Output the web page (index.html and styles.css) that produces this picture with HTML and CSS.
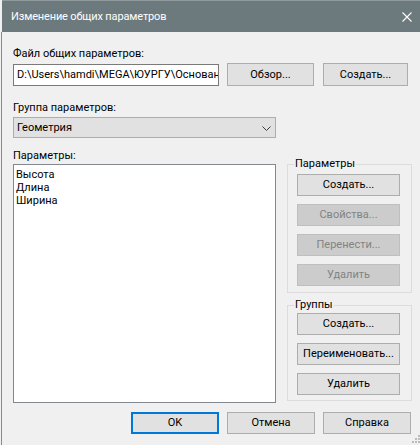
FILE: index.html
```html
<!DOCTYPE html>
<html lang="ru">
<head>
<meta charset="utf-8">
<title>Изменение общих параметров</title>
<link rel="stylesheet" href="styles.css">
</head>
<body>
<div class="window">
  <div class="titlebar">
    <span class="title">Изменение общих параметров</span>
    <svg class="close" width="10" height="10" viewBox="0 0 10 10"><path d="M0.5 0.5L9.5 9.5M9.5 0.5L0.5 9.5" stroke="#ffffff" stroke-width="1.1" fill="none"/></svg>
  </div>
  <div class="content">
    <div class="label">Файл общих параметров:</div>
    <div class="file-row">
      <div class="input"><span class="input-text">D:\Users\hamdi\MEGA\ЮУРГУ\Основани</span></div>
      <button class="btn btn-browse">Обзор...</button>
      <button class="btn btn-new">Создать...</button>
    </div>
    <div class="label label-group">Группа параметров:</div>
    <div class="select">
      <span class="select-text">Геометрия</span>
      <svg class="chevron" width="9" height="5" viewBox="0 0 9 5"><path d="M0.5 0.5L4.5 4.5L8.5 0.5" stroke="#3c3c3c" stroke-width="1" fill="none"/></svg>
    </div>
    <div class="middle">
      <div class="left">
        <div class="label label-params">Параметры:</div>
        <div class="listbox">
          <div class="item">Высота</div>
          <div class="item">Длина</div>
          <div class="item">Ширина</div>
        </div>
      </div>
      <div class="right">
        <div class="group group-params">
          <span class="legend">Параметры</span>
          <button class="btn gbtn">Создать...</button>
          <button class="btn gbtn disabled">Свойства...</button>
          <button class="btn gbtn disabled">Перенести...</button>
          <button class="btn gbtn disabled">Удалить</button>
        </div>
        <div class="group group-groups">
          <span class="legend">Группы</span>
          <button class="btn gbtn">Создать...</button>
          <button class="btn gbtn">Переименовать...</button>
          <button class="btn gbtn">Удалить</button>
        </div>
      </div>
    </div>
    <div class="footer">
      <button class="btn fbtn default">OK</button>
      <button class="btn fbtn">Отмена</button>
      <button class="btn fbtn">Справка</button>
    </div>
  </div>
  <svg class="grip" width="8" height="8" viewBox="0 0 8 8">
    <rect x="6" y="0" width="2" height="2" fill="#bdbdbd"/>
    <rect x="3" y="3" width="2" height="2" fill="#bdbdbd"/>
    <rect x="6" y="3" width="2" height="2" fill="#bdbdbd"/>
    <rect x="0" y="6" width="2" height="2" fill="#bdbdbd"/>
    <rect x="3" y="6" width="2" height="2" fill="#bdbdbd"/>
    <rect x="6" y="6" width="2" height="2" fill="#bdbdbd"/>
  </svg>
</div>
</body>
</html>
```

FILE: styles.css
```css
* {
  box-sizing: border-box;
}

html, body {
  margin: 0;
  padding: 0;
}

body {
  background: #f0f0f0;
  font-family: Roboto, "Noto Sans", sans-serif;
  font-size: 11px;
  color: #000000;
  width: 420px;
  height: 445px;
  overflow: hidden;
}

.window {
  position: relative;
  margin-left: 1px;
  width: 419px;
  height: 445px;
  display: flex;
  flex-direction: column;
  background: #f0f0f0;
}

.titlebar {
  height: 32px;
  flex: none;
  margin-left: 1px;
  border-top: 1px solid #8f9a9c;
  background: #6c797d;
  display: flex;
  align-items: center;
  justify-content: space-between;
  padding: 0 8px 0 9px;
}

.title {
  color: #ffffff;
  font-size: 11px;
  letter-spacing: -0.15px;
  line-height: 15px;
}

.close {
  display: block;
}

.content {
  flex: 1;
  border-left: 1px solid #8a8a8a;
  padding: 14px 8px 0 11px;
  display: flex;
  flex-direction: column;
}

.label {
  height: 15px;
  line-height: 15px;
  white-space: nowrap;
}

.file-row {
  margin-top: 2px;
  display: flex;
  align-items: flex-end;
  height: 23px;
}

.input {
  width: 206px;
  height: 22px;
  background: #ffffff;
  border: 1px solid #7a7a7a;
  padding: 0 3px;
  line-height: 19px;
  overflow: hidden;
  white-space: nowrap;
}

.btn {
  font-family: inherit;
  font-size: 11px;
  color: #000000;
  background: #e1e1e1;
  border: 1px solid #adadad;
  border-radius: 0;
  padding: 0;
  margin: 0;
  height: 22px;
  line-height: 18px;
  text-align: center;
  white-space: nowrap;
  display: block;
}

.btn-browse {
  width: 87px;
  height: 23px;
  margin-left: 8px;
}

.btn-new {
  width: 85px;
  height: 23px;
  margin-left: 9px;
}

.label-group {
  margin-top: 14px;
}

.select {
  margin-top: 2px;
  width: 263px;
  height: 21px;
  background: #e1e1e1;
  border: 1px solid #adadad;
  display: flex;
  align-items: center;
  justify-content: space-between;
  padding: 0 4px 0 3px;
}

.select-text {
  line-height: 19px;
}

.chevron {
  display: block;
  margin-top: 1px;
}

.middle {
  margin-top: 10px;
  display: flex;
  align-items: flex-start;
  gap: 11px;
}

.left {
  width: 263px;
  display: flex;
  flex-direction: column;
}

.listbox {
  margin-top: 1px;
  height: 239px;
  background: #ffffff;
  border: 1px solid #828790;
  padding: 3px 2px;
}

.item {
  line-height: 13px;
  height: 13px;
  white-space: nowrap;
}

.right {
  width: 125px;
  margin-top: 16px;
  display: flex;
  flex-direction: column;
  gap: 12px;
}

.group {
  position: relative;
  border: 1px solid #dcdcdc;
  padding: 9px 0 6px 9px;
  display: flex;
  flex-direction: column;
  gap: 8px;
}

.group-groups {
  padding-top: 7px;
  padding-bottom: 5px;
}

.legend {
  position: absolute;
  left: 6px;
  top: -9px;
  padding: 0 1px;
  background: #f0f0f0;
  line-height: 15px;
  white-space: nowrap;
}

.gbtn {
  width: 103px;
}

.btn.disabled {
  background: #cccccc;
  border-color: #bfbfbf;
  color: #838383;
}

.footer {
  margin-top: 9px;
  margin-right: 1px;
  display: flex;
  justify-content: flex-end;
  gap: 8px;
}

.fbtn {
  width: 88px;
}

.fbtn.default {
  border: 2px solid #0078d7;
  line-height: 18px;
}

.grip {
  position: absolute;
  right: 0;
  bottom: 2px;
  display: block;
}
```
